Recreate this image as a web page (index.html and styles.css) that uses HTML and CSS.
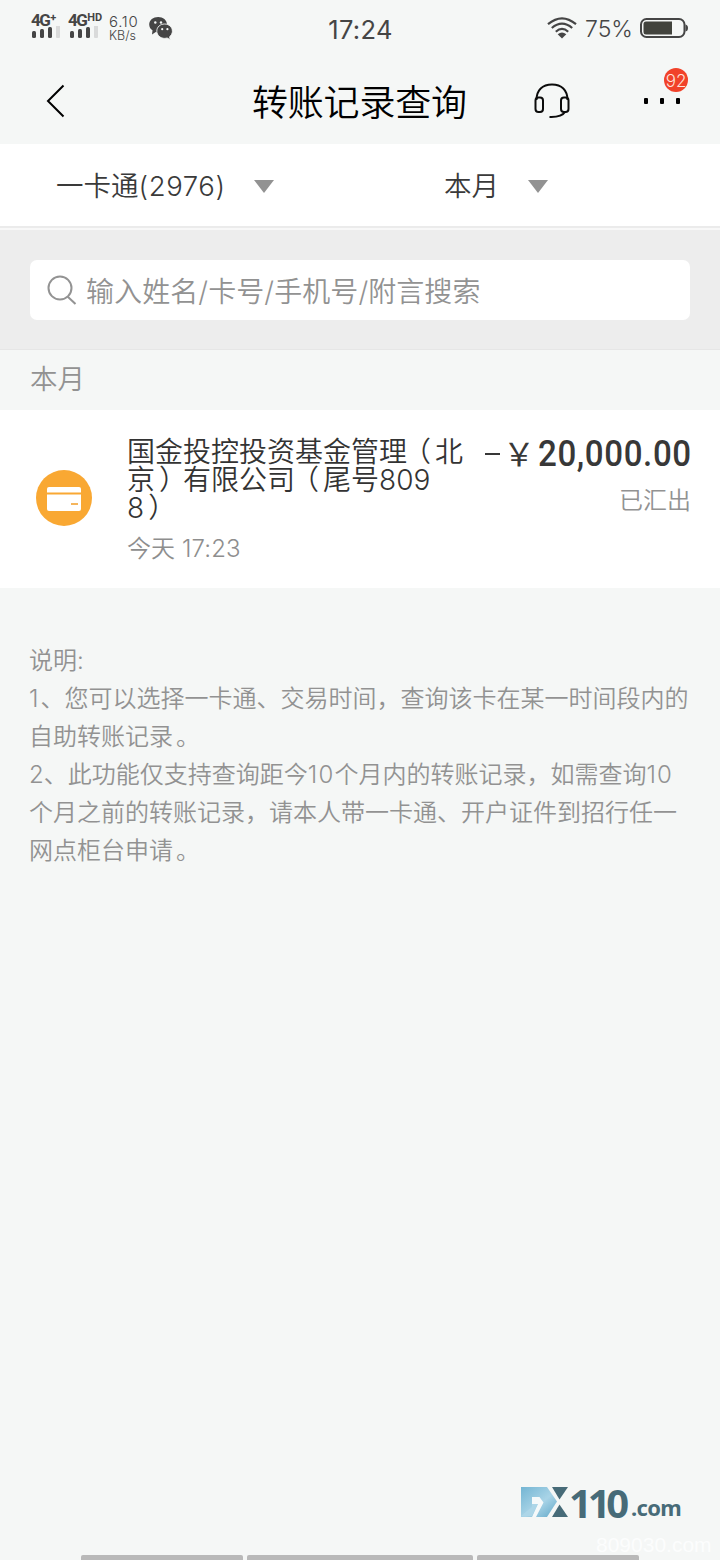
FILE: index.html
```html
<!DOCTYPE html>
<html lang="zh-CN">
<head>
<meta charset="utf-8">
<title>转账记录查询</title>
<link rel="stylesheet" href="styles.css">
</head>
<body>
<div class="screen">
  <div class="status">
    <div class="signals">
      <div class="signal">
        <div class="net">4G<sup>+</sup></div>
        <svg width="30" height="12" viewBox="0 0 30 12"><g fill="#454545"><rect x="1" y="5" width="4" height="7" rx="1.500"/><rect x="9" y="3" width="4" height="9" rx="1.500"/><rect x="17" y="1" width="4" height="11" rx="1.500"/></g><rect x="25" y="-1" width="4" height="13" rx="1" fill="#d9dada"/></svg>
      </div>
      <div class="signal signal-hd">
        <div class="net">4G<sup>HD</sup></div>
        <svg width="30" height="12" viewBox="0 0 30 12"><g fill="#454545"><rect x="2" y="5" width="4" height="7" rx="1.500"/><rect x="10" y="3" width="4" height="9" rx="1.500"/><rect x="18" y="1" width="4" height="11" rx="1.500"/></g><rect x="26" y="-1" width="4" height="13" rx="1" fill="#d9dada"/></svg>
      </div>
      <div class="speed"><span class="speed-num">6.10</span><span class="speed-unit">KB/s</span></div>
      <svg class="wechat" width="24" height="24" viewBox="0 0 24 24">
        <path d="M9.200 1C4.200 1 .2 4.100 .2 8.500c0 2.600 1.300 4.500 3.300 5.800L3 18.500l3.800-2.400 2.400.4C14 16.500 18 13 18 8.700 18 4.100 14 1 9.200 1z" fill="#454545"/>
        <path d="M15.600 8c-4.400 0-7.800 3-7.800 7.100S11.200 22.400 15.900 22.400l2.300-.4 3 1.700-.6-3c1.600-1.200 2.800-3.200 2.800-5.400 0-4.300-3.400-7.300-7.800-7.300z" fill="#454545" stroke="#f5f7f6" stroke-width=".9"/>
        <g fill="#f5f7f6"><circle cx="6.300" cy="6.500" r="1.200"/><circle cx="12" cy="6.500" r="1.200"/><circle cx="13.200" cy="13.200" r="1.100"/><circle cx="18.400" cy="13.200" r="1.100"/></g>
      </svg>
    </div>
    <div class="clock">17:24</div>
    <div class="power">
      <svg width="32" height="24" viewBox="0 0 32 24"><g fill="none" stroke="#454545" stroke-width="2.200"><path d="M2 8.200Q16-3.600 30 8.200"/><path d="M5.800 12Q16 3.400 26.200 12"/><path d="M9.800 15.700Q16 10.200 22.200 15.700"/></g><path d="M11.700 18.300Q16 14.500 20.300 18.300L16 22.500z" fill="#454545"/></svg>
      <span class="percent">75%</span>
      <svg width="49" height="20" viewBox="0 0 49 20"><rect x="1" y="1" width="43.500" height="18" rx="5.500" fill="none" stroke="#454545" stroke-width="2"/><path d="M6 3.500h26v13H6q-2.500 0-2.500-2.500V6Q3.500 3.500 6 3.500z" fill="#42433d"/><path d="M45.500 6.500q2.500.5 2.500 3.500t-2.500 3.500z" fill="#454545"/></svg>
    </div>
  </div>

  <header class="header">
    <svg class="back" width="20" height="36" viewBox="0 0 20 36"><path d="M17.500 2.500L2 18 17.500 33.500" fill="none" stroke="#000" stroke-width="2"/></svg>
    <h1 class="title">转账记录查询</h1>
    <svg class="headset" width="36" height="36" viewBox="0 0 36 36"><g fill="none" stroke="#0c0c0c" stroke-width="2"><path d="M2.500 17C2.500 7 8.500 1.500 18 1.500S33.500 7 33.500 17"/><rect x="1.500" y="14.500" width="7.500" height="14.500" rx="3"/><rect x="27" y="14.500" width="7.500" height="14.500" rx="3"/><path d="M31.500 28.500Q27.500 34.500 15.500 34"/></g></svg>
    <div class="more">
      <i></i><i></i><i></i>
      <span class="badge">92</span>
    </div>
  </header>

  <div class="filters">
    <div class="filter filter-card"><span>一卡通<b>(2976)</b></span><i class="caret"></i></div>
    <div class="filter filter-month"><span>本月</span><i class="caret"></i></div>
  </div>

  <div class="search">
    <div class="search-box">
      <svg width="30" height="30" viewBox="0 0 30 30"><g fill="none" stroke="#939393" stroke-width="2"><circle cx="13" cy="13" r="11.500"/><path d="M20.500 21.500L28.500 29"/></g></svg>
      <span>输入姓名/卡号/手机号/附言搜索</span>
    </div>
  </div>

  <div class="group">本月</div>

  <div class="record">
    <svg class="card-icon" width="56" height="56" viewBox="0 0 56 56"><circle cx="28" cy="28" r="28" fill="#f9a833"/><rect x="11" y="17" width="34" height="24" rx="2" fill="#fff"/><path d="M11 23.500h34" stroke="#f9a833" stroke-width="2"/><path d="M35 34h7" stroke="#f5b55c" stroke-width="2"/></svg>
    <div class="record-main">
      <div class="payee"><div>国金投控投资基金管理<span class="open">（</span>北</div><div>京<span class="close">）</span>有限公司<span class="open">（</span>尾号809</div><div>8<span class="close">）</span></div></div>
      <div class="when">今天 17:23</div>
    </div>
    <div class="record-side">
      <div class="amount"><i class="minus"></i><span class="yen">￥</span><span class="digits">20,000.00</span></div>
      <div class="state">已汇出</div>
    </div>
  </div>

  <div class="notes">
    <p>说明:</p>
    <p><span class="num-lead">1</span>、您可以选择一卡通、交易时间，查询该卡在某一时间段内的</p>
    <p>自助转账记录<span class="stop">。</span></p>
    <p>2、此功能仅支持查询距今<span class="num">10</span>个月内的转账记录，如需查询<span class="num">10</span></p>
    <p>个月之前的转账记录，请本人带一卡通、开户证件到招行任一</p>
    <p>网点柜台申请<span class="stop">。</span></p>
  </div>

  <div class="logo">
    <svg width="48" height="31" viewBox="0 0 48 31">
      <defs><linearGradient id="ice" x1="0" y1="0" x2="1" y2="1"><stop offset="0" stop-color="#73b5d3"/><stop offset=".55" stop-color="#a9d4e7"/><stop offset="1" stop-color="#5fa7c8"/></linearGradient></defs>
      <path d="M0 0h26l10 14.500L26 30H0z" fill="url(#ice)"/>
      <path d="M11 10h7.500l4 5.500L15 30h-4l6-13h-6z" fill="#f5f9fa"/>
      <path d="M11 17h5.500L11 29H0l11-9z" fill="#add6e8"/>
      <path d="M31 0h16L38.500 12.500z" fill="#476b78"/><path d="M38.500 17.500L47 30H31z" fill="#476b78"/>
    </svg>
    <span class="logo-num">110</span><span class="logo-com">.com</span>
  </div>
  <div class="watermark">809030.com</div>
  <div class="navbars"><i class="nav-a"></i><i class="nav-b"></i><i class="nav-c"></i></div>
</div>
</body>
</html>
```
FILE: styles.css
```css
* { box-sizing: border-box; }
body, h1, p { margin: 0; }
body { background: #f5f7f6; }
.screen {
  position: relative;
  width: 720px;
  height: 1560px;
  overflow: hidden;
  background: #f5f7f6;
  font-family: Inter, "Noto Sans CJK SC", sans-serif;
  font-weight: 350;
  white-space: nowrap;
}
svg { display: block; flex: none; }

.status {
  display: grid;
  grid-template-columns: 1fr 80px 1fr;
  height: 58px;
  color: #454545;
}
.signals { display: flex; padding-left: 31px; }
.signal { width: 37px; padding-top: 13px; }
.signal-hd { width: 41px; }
.net { height: 13px; font: 700 17px/15px Roboto, sans-serif; letter-spacing: -1.500px; }
.net sup { margin-left: 1px; font-size: 11px; line-height: 0; vertical-align: 5px; letter-spacing: 0; }
.speed { display: flex; flex-direction: column; width: 40px; padding-top: 15px; }
.speed-num { font: 350 15px/14px Inter, sans-serif; letter-spacing: .7px; }
.speed-unit { font: 350 12.500px/13px Inter, sans-serif; }
.wechat { margin-top: 16px; }
.clock { padding: 15px 0 0 1px; font-size: 25.500px; line-height: 30px; font-weight: 400; text-align: center; letter-spacing: .3px; }
.power { display: flex; align-items: center; justify-content: flex-end; height: 56px; padding-right: 31px; }
.percent { width: 47px; margin: 2px 8px 0 7px; font-size: 23px; }

.header { display: flex; height: 86px; padding-left: 46px; }
.back { margin-top: 25px; }
.title { width: 216px; margin: 20px 0 0 186px; font-size: 36px; line-height: 50px; font-weight: 350; letter-spacing: -.2px; color: #000; }
.headset { margin: 25px 0 0 66px; }
.more { position: relative; display: flex; gap: 12px; margin: 40px 0 0 74px; }
.more i { width: 4px; height: 6px; background: #000; border-radius: 1px; }
.badge {
  position: absolute;
  left: 20px;
  top: -30px;
  width: 24px;
  height: 24px;
  border-radius: 50%;
  background: #f1422a;
  color: #ffe3dc;
  font-size: 17px;
  line-height: 26px;
  text-align: center;
}

.filters { display: flex; height: 86px; background: #fff; border-bottom: 2px solid #f8f8f8; box-shadow: inset 0 -2px #ebebeb; }
.filter { display: flex; width: 360px; height: 79px; align-items: center; font-size: 27.500px; color: #3a3a3a; }
.filter b { font-weight: inherit; letter-spacing: .6px; }
.filter-card { padding-left: 56px; }
.filter-card span { width: 198px; }
.filter-month { padding-left: 84px; }
.filter-month span { width: 84px; }
.caret { border: 10.500px solid transparent; border-top: 13px solid #929292; border-bottom: 0; margin-top: 5px; }

.search { height: 120px; padding: 30px; background: #ededed; border-bottom: 1px solid #e6e6e6; }
.search-box { display: flex; align-items: center; gap: 9px; height: 60px; padding-left: 17px; border-radius: 7px; background: #fff; color: #929292; font-size: 28px; }
.search-box span { padding-top: 3px; line-height: 34px; letter-spacing: .08px; }

.group { height: 60px; padding-left: 30px; font-size: 27.500px; line-height: 59px; color: #929292; }

.record { display: flex; height: 178px; padding: 0 29px 0 36px; background: #fff; }
.card-icon { margin-top: 60px; }
.record-main { width: 340px; margin-left: 35px; padding-top: 28px; }
.payee { font-size: 28px; line-height: 28px; color: #333; }
.open { margin: 0 4px 0 -4px; }
.close { margin: 0 -4px 0 4px; }
.when { margin-top: 9px; font-size: 24px; line-height: 36px; letter-spacing: .1px; color: #8e8e8e; }
.record-side { flex: 1; display: flex; flex-direction: column; align-items: flex-end; padding-top: 24px; }
.amount { display: flex; height: 40px; color: #383838; }
.minus { width: 15px; height: 2px; margin-top: 19px; background: #383838; }
.yen { width: 32px; margin: 0 3px; font: 400 32px/36px "Noto Sans CJK SC", sans-serif; }
.digits { width: 153px; font: 500 36px/40px Roboto, sans-serif; letter-spacing: .65px; transform: scaleX(.92); transform-origin: left; }
.state { margin-top: 9px; font-size: 24px; line-height: 36px; color: #929292; }

.notes { padding: 54px 0 0 29px; font-size: 24px; line-height: 38px; color: #929292; }
.num { letter-spacing: 1.200px; }
.num-lead { letter-spacing: 2px; }
.stop { margin-left: 3px; }

.logo { position: absolute; left: 521px; top: 1487px; display: flex; color: #476b78; }
.logo-num { width: 62px; font: 700 40px/31px "Noto Sans", sans-serif; letter-spacing: -4.200px; }
.logo-com { font: 700 22px/41px "Noto Sans", sans-serif; letter-spacing: -.7px; }
.watermark { position: absolute; left: 596px; top: 1533px; font: 400 21px/24px "Liberation Sans", sans-serif; color: #fcfdfd; }
.navbars { position: absolute; left: 81px; top: 1555px; display: flex; gap: 4px; }
.navbars i { height: 5px; background: #b9b9b9; border-radius: 2px 2px 0 0; }
.nav-a { width: 162px; }
.nav-b { width: 226px; }
.nav-c { width: 162px; }
```
